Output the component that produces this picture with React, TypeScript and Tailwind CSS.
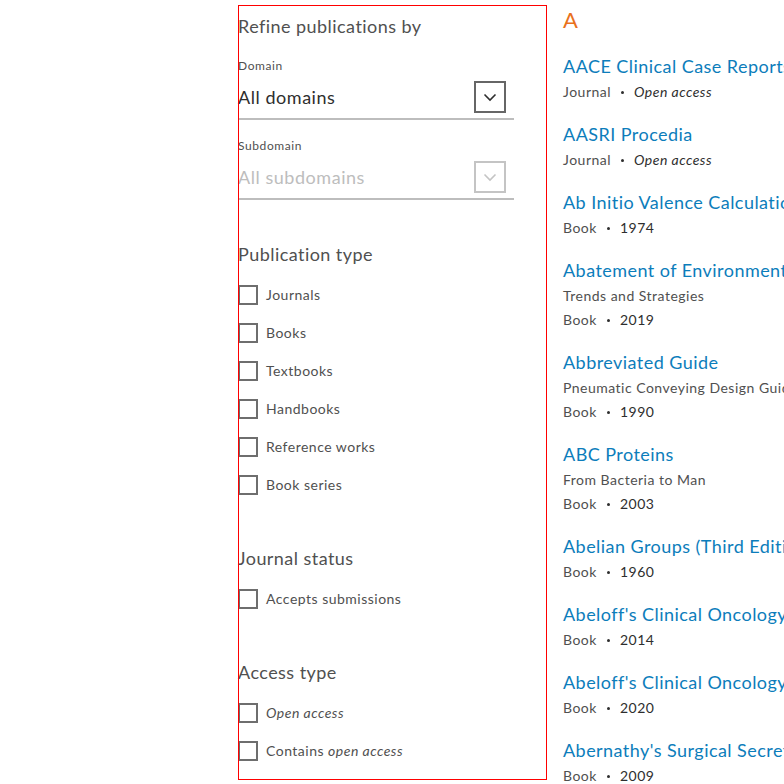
import React from "react";

const font = { fontFamily: "Lato, 'Open Sans', sans-serif" };

function Chevron({ color }: { color: string }) {
  return (
    <svg width="14" height="9" viewBox="0 0 14 9" fill="none">
      <path d="M1.5 1.5 L7 7 L12.5 1.5" stroke={color} strokeWidth="1.6" />
    </svg>
  );
}

function Select({ label, value, disabled }: { label: string; value: string; disabled?: boolean }) {
  return (
    <div className="flex flex-col">
      <div className="text-[12px] leading-[16px] tracking-[0.05em] text-[#505050]">{label}</div>
      <div className="w-[276px] mt-[7px] pb-[5px] border-b-2 border-[#bdbdbd]">
        <div className="flex items-center justify-between h-[32px] pr-[8px]">
          <span
            className={`text-[18px] leading-[28px] tracking-[0.03em] ${disabled ? "text-[#bdbdbd]" : "text-[#2e2e2e]"}`}
          >
            {value}
          </span>
          <div
            className={`w-[32px] h-[32px] flex items-center justify-center border-2 ${disabled ? "border-[#c4c4c4]" : "border-[#666666]"}`}
          >
            <Chevron color={disabled ? "#c4c4c4" : "#2e2e2e"} />
          </div>
        </div>
      </div>
    </div>
  );
}

function Check({ children }: { children: React.ReactNode }) {
  return (
    <div className="flex items-center h-[20px]">
      <div className="w-[20px] h-[20px] border-2 border-[#6e6e6e] shrink-0" />
      <span className="ml-[8px] text-[14px] leading-[20px] tracking-[0.035em] text-[#505050]">{children}</span>
    </div>
  );
}

function Heading({ children, className = "" }: { children: React.ReactNode; className?: string }) {
  return (
    <div className={`text-[18px] leading-[28px] tracking-[0.025em] text-[#505050] ${className}`}>{children}</div>
  );
}

type Item = { title: string; sub?: string; type: string; extra: string; italic?: boolean };

const items: Item[] = [
  { title: "AACE Clinical Case Reports", type: "Journal", extra: "Open access", italic: true },
  { title: "AASRI Procedia", type: "Journal", extra: "Open access", italic: true },
  { title: "Ab Initio Valence Calculations in Chemistry", type: "Book", extra: "1974" },
  { title: "Abatement of Environmental Pollutants", sub: "Trends and Strategies", type: "Book", extra: "2019" },
  { title: "Abbreviated Guide", sub: "Pneumatic Conveying Design Guide", type: "Book", extra: "1990" },
  { title: "ABC Proteins", sub: "From Bacteria to Man", type: "Book", extra: "2003" },
  { title: "Abelian Groups (Third Edition)", type: "Book", extra: "1960" },
  { title: "Abeloff's Clinical Oncology", type: "Book", extra: "2014" },
  { title: "Abeloff's Clinical Oncology", type: "Book", extra: "2020" },
  { title: "Abernathy's Surgical Secrets", type: "Book", extra: "2009" },
];

export default function App() {
  return (
    <div className="w-[784px] h-[784px] overflow-hidden bg-white flex items-start gap-4 pl-[238px]" style={font}>
      <aside className="w-[309px] h-[775px] mt-[5px] outline outline-1 -outline-offset-1 outline-[#ff0000] shrink-0 flex flex-col">
        <Heading className="mt-[7px]">Refine publications by</Heading>
        <div className="mt-[18px]">
          <Select label="Domain" value="All domains" />
        </div>
        <div className="mt-[18px]">
          <Select label="Subdomain" value="All subdomains" disabled />
        </div>
        <Heading className="mt-[40px]">Publication type</Heading>
        <div className="mt-[17px] flex flex-col gap-[18px]">
          <Check>Journals</Check>
          <Check>Books</Check>
          <Check>Textbooks</Check>
          <Check>Handbooks</Check>
          <Check>Reference works</Check>
          <Check>Book series</Check>
        </div>
        <Heading className="mt-[49px]">Journal status</Heading>
        <div className="mt-[17px] flex flex-col gap-[18px]">
          <Check>Accepts submissions</Check>
        </div>
        <Heading className="mt-[49px]">Access type</Heading>
        <div className="mt-[17px] flex flex-col gap-[18px]">
          <Check>
            <i>Open access</i>
          </Check>
          <Check>
            Contains <i>open access</i>
          </Check>
        </div>
      </aside>
      <main className="flex flex-col shrink-0 mt-[6px]">
        <div className="text-[22px] leading-[28px] text-[#e9711c]">A</div>
        <div className="mt-[18px] flex flex-col gap-[16px]">
          {items.map((it, i) => (
            <div key={i} className="flex flex-col">
              <div className="text-[18px] leading-[28px] tracking-[0.025em] text-[#0c7dbb] whitespace-nowrap">
                {it.title}
              </div>
              {it.sub && (
                <div className="text-[14px] leading-[24px] tracking-[0.035em] text-[#505050] whitespace-nowrap">
                  {it.sub}
                </div>
              )}
              <div className="text-[14px] leading-[24px] tracking-[0.035em] whitespace-nowrap flex items-center">
                <span className="text-[#505050]">{it.type}</span>
                <span className="mx-[10px] inline-block w-[3px] h-[3px] rounded-full bg-[#2e2e2e]" />
                {it.italic ? (
                  <i className="text-[#2e2e2e]">{it.extra}</i>
                ) : (
                  <span className="text-[#2e2e2e]">{it.extra}</span>
                )}
              </div>
            </div>
          ))}
        </div>
      </main>
    </div>
  );
}
